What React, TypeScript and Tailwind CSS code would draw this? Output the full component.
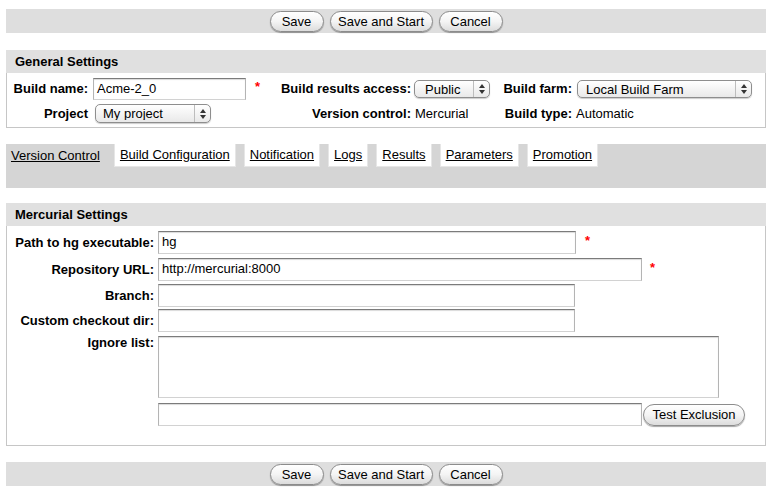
import React from "react";

const btn =
  "h-[21px] rounded-full border border-[#8c8c8c] bg-gradient-to-b from-white via-[#f4f4f4] to-[#dcdcdc] shadow-[0_1px_1px_rgba(0,0,0,0.35)] text-[13px] leading-[19px] text-black text-center";

const field =
  "bg-white border border-t-[#7b7b7b] border-x-[#b4b4b4] border-b-[#d2d2d2] shadow-[inset_0_1px_1px_rgba(0,0,0,0.15)] pl-[3px] text-[13px] leading-[20px]";

function ButtonBar() {
  return (
    <div className="h-[24px] bg-[#dedede] flex items-center justify-center gap-[6px]">
      <div className={`${btn} w-[54px]`}>Save</div>
      <div className={`${btn} w-[103px]`}>Save and Start</div>
      <div className={`${btn} w-[64px]`}>Cancel</div>
    </div>
  );
}

function Select({ value, className }: { value: string; className: string }) {
  return (
    <div
      className={`flex items-center rounded-[5px] border border-[#8e8e8e] bg-gradient-to-b from-white to-[#e9e9e9] shadow-[0_1px_1px_rgba(0,0,0,0.2)] ${className}`}
    >
      <span className="flex-1 text-[13px] leading-none truncate">{value}</span>
      <span className="w-[16px] h-full border-l border-[#bdbdbd] flex flex-col items-center justify-center gap-[2px]">
        <svg width="6" height="4" viewBox="0 0 6 4">
          <path d="M3 0 L6 4 L0 4 Z" fill="#333" />
        </svg>
        <svg width="6" height="4" viewBox="0 0 6 4">
          <path d="M0 0 L6 0 L3 4 Z" fill="#333" />
        </svg>
      </span>
    </div>
  );
}

function Star() {
  return <span className="text-[#ff0000] font-bold text-[13px] leading-none">*</span>;
}

function SectionHeader({ title }: { title: string }) {
  return (
    <div className="h-[23px] bg-[#e0e0e0] flex items-center pl-[9px] font-bold text-[13px]">{title}</div>
  );
}

const tabs = ["Build Configuration", "Notification", "Logs", "Results", "Parameters", "Promotion"];

export default function App() {
  return (
    <div className="w-[774px] h-[497px] bg-white pl-[6px] pr-[8px] pt-[9px] font-['Liberation_Sans',Arial,sans-serif] text-[13px] text-black">
      <ButtonBar />

      {/* General settings */}
      <div className="mt-[17px]">
        <SectionHeader title="General Settings" />
        <div className="border-x border-b border-[#c6c6c6] pt-[5px] pb-[4px] grid grid-cols-[84px_179px_141px_84px_78px_auto] grid-rows-[22px_19px] gap-y-[4px] items-center">
          <div className="font-bold text-right pr-[3px]">Build name:</div>
          <div className="flex items-center">
            <div className={`${field} ml-[2px] w-[153px] h-[22px]`}>Acme-2_0</div>
            <span className="ml-[9px] -mt-[4px]">
              <Star />
            </span>
          </div>
          <div className="font-bold text-right">Build results access:</div>
          <div>
            <Select value="Public" className="ml-[3px] w-[76px] h-[18px] pl-[10px]" />
          </div>
          <div className="font-bold text-right pr-[1px]">Build farm:</div>
          <div>
            <Select value="Local Build Farm" className="ml-[4px] w-[175px] h-[18px] pl-[8px]" />
          </div>

          <div className="font-bold text-right pr-[3px]">Project</div>
          <div>
            <Select value="My project" className="ml-[4px] w-[116px] h-[19px] pl-[7px]" />
          </div>
          <div className="font-bold text-right">Version control:</div>
          <div className="pl-[4px]">Mercurial</div>
          <div className="font-bold text-right pr-[1px]">Build type:</div>
          <div className="pl-[3px]">Automatic</div>
        </div>
      </div>

      {/* Tabs */}
      <div className="mt-[16px] h-[44px] bg-[#d5d5d5]">
        <div className="flex h-[23px]">
          <div className="pl-[5px] pr-[6px] flex items-center underline">Version Control</div>
          {tabs.map((t) => (
            <div
              key={t}
              className="ml-[8px] bg-white border border-t-0 border-[#e6e6e6] px-[5px] flex items-center underline"
            >
              {t}
            </div>
          ))}
        </div>
      </div>

      {/* Mercurial settings */}
      <div className="mt-[15px]">
        <SectionHeader title="Mercurial Settings" />
        <div className="border-x border-b border-[#c6c6c6] pt-[5px] pb-[19px] flex flex-col">
          <div className="flex items-center h-[23px]">
            <div className="w-[150px] text-right pr-[3px] font-bold">Path to hg executable:</div>
            <div className={`${field} ml-[1px] w-[418px] h-[23px]`}>hg</div>
            <span className="ml-[9px] -mt-[4px]">
              <Star />
            </span>
          </div>
          <div className="flex items-center h-[23px] mt-[4px]">
            <div className="w-[150px] text-right pr-[3px] font-bold">Repository URL:</div>
            <div className={`${field} ml-[1px] w-[484px] h-[23px]`}>http://mercurial:8000</div>
            <span className="ml-[8px] -mt-[4px]">
              <Star />
            </span>
          </div>
          <div className="flex items-center h-[23px] mt-[3px]">
            <div className="w-[150px] text-right pr-[3px] font-bold">Branch:</div>
            <div className={`${field} ml-[1px] w-[417px] h-[23px]`}></div>
          </div>
          <div className="flex items-center h-[23px] mt-[2px]">
            <div className="w-[150px] text-right pr-[3px] font-bold">Custom checkout dir:</div>
            <div className={`${field} ml-[1px] w-[417px] h-[23px]`}></div>
          </div>
          <div className="flex items-start mt-[4px]">
            <div className="w-[150px] text-right pr-[3px] font-bold leading-[13px]">Ignore list:</div>
            <div className={`${field} ml-[1px] w-[561px] h-[62px]`}></div>
          </div>
          <div className="flex items-center mt-[5px]">
            <div className="w-[150px]"></div>
            <div className={`${field} ml-[1px] w-[484px] h-[23px]`}></div>
            <div className={`${btn} ml-[1px] w-[102px] h-[22px]`}>Test Exclusion</div>
          </div>
        </div>
      </div>

      <div className="mt-[16px]">
        <ButtonBar />
      </div>
    </div>
  );
}
